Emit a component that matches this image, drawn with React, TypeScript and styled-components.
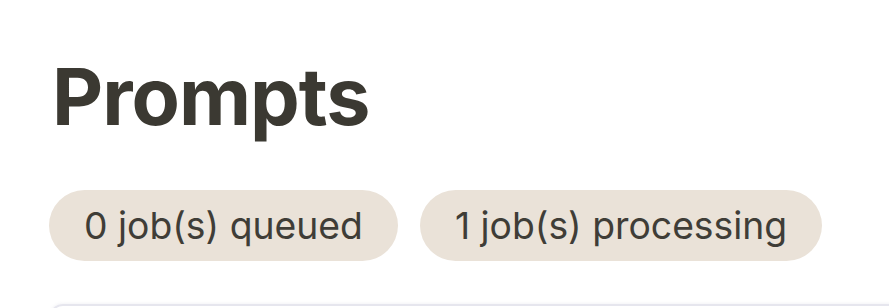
import styled, { createGlobalStyle } from 'styled-components'

const GlobalStyle = createGlobalStyle`
  html, body {
    margin: 0;
    padding: 0;
    background: #ffffff;
    overflow: hidden;
  }
  body {
    font-family: Inter, "Noto Sans", sans-serif;
  }
`

const Page = styled.main`
  padding: 48px 0 0 49px;
  width: 889px;
  height: 308px;
  box-sizing: border-box;
  overflow: hidden;
`

const Title = styled.h1`
  margin: 0 0 0 3px;
  font-size: 79px;
  line-height: 96px;
  font-weight: 700;
  letter-spacing: -1px;
  color: #3b3932;
`

const Badges = styled.div`
  display: flex;
  gap: 22px;
  margin-top: 46px;
`

const Badge = styled.span`
  display: inline-flex;
  align-items: center;
  height: 71px;
  padding: 0 35px;
  border-radius: 36px;
  background: #eae2d8;
  color: #3f3d37;
  font-size: 37.3px;
  white-space: nowrap;
`

const Card = styled.section`
  margin-top: 43px;
  width: 860px;
  height: 120px;
  border: 2px solid #e6e6ee;
  border-radius: 14px;
  box-shadow: 0 -1px 3px rgba(120, 120, 150, 0.08);
`

export default function App() {
  const queued = 0
  const processing = 1

  return (
    <>
      <GlobalStyle />
      <Page>
        <Title>Prompts</Title>
        <Badges>
          <Badge>{queued} job(s) queued</Badge>
          <Badge>{processing} job(s) processing</Badge>
        </Badges>
        <Card />
      </Page>
    </>
  )
}
